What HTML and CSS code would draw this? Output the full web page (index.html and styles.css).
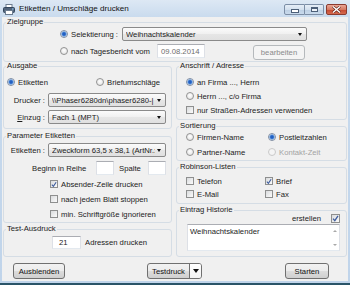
FILE: index.html
```html
<!DOCTYPE html>
<html>
<head>
	<meta charset="utf-8">
	<title>Etiketten / Umschläge drucken</title>
	<link rel="stylesheet" href="styles.css">
</head>
<body>

<div class="fenster">

	<!-- Titelleiste -->
	<div class="titelleiste">
		<svg class="titel-icon" width="12" height="11" viewBox="0 0 12 11">
			<rect x="3" y="0.5" width="6" height="3" fill="#fff" stroke="#6d7d90" stroke-width="1"/>
			<rect x="0.5" y="3.5" width="11" height="5" rx="1" fill="#52657c" stroke="#34465c" stroke-width="1"/>
			<rect x="2.5" y="6.5" width="7" height="4" fill="#fff" stroke="#6d7d90" stroke-width="1"/>
			<rect x="9" y="4.5" width="1.5" height="1" fill="#8fd0ff"/>
		</svg>
		<span class="titel">Etiketten / Umschläge drucken</span>
		<div class="fenster-knoepfe">
			<span class="wk wk-min"><i></i></span>
			<span class="wk wk-max"><i></i></span>
			<span class="wk wk-close">
				<svg width="9" height="7" viewBox="0 0 9 7">
					<path d="M1 0.5 L8 6.5 M8 0.5 L1 6.5" stroke="#5a2018" stroke-width="2.6"/>
					<path d="M1 0.5 L8 6.5 M8 0.5 L1 6.5" stroke="#fff" stroke-width="1.4"/>
				</svg>
			</span>
		</div>
	</div>

	<div class="inhalt">

		<!-- Zielgruppe -->
		<fieldset class="gruppe g-ziel">
			<legend>Zielgruppe</legend>
			<div class="ziel-inhalt">
				<div class="ziel-zeile">
					<label class="option b-selekt"><span class="radio an"></span>Selektierung :</label>
					<div class="combo c-selekt"><span>Weihnachtskalender</span><i class="pfeil"></i></div>
				</div>
				<div class="ziel-zeile z2">
					<label class="option b-tages"><span class="radio"></span>nach Tagesbericht vom</label>
					<div class="feld f-datum grau">09.08.2014</div>
					<button class="knopf aus k-bearbeiten">bearbeiten</button>
				</div>
			</div>
		</fieldset>

		<div class="spalten">

			<!-- linke Spalte -->
			<div class="spalte">
				<fieldset class="gruppe g-ausgabe">
					<legend>Ausgabe</legend>
					<div class="zeile z-ausg">
						<label class="option b-etik"><span class="radio an"></span>Etiketten</label>
						<label class="option"><span class="radio"></span>Briefumschläge</label>
					</div>
					<div class="zeile z-drucker">
						<span class="lbl">Drucker :</span>
						<div class="combo c-breit"><span>\\Phaser6280dn\phaser6280-|</span><i class="pfeil"></i></div>
					</div>
					<div class="zeile z-einzug">
						<span class="lbl"><u>E</u>inzug :</span>
						<div class="combo c-breit"><span>Fach 1 (MPT)</span><i class="pfeil"></i></div>
					</div>
				</fieldset>

				<fieldset class="gruppe g-param">
					<legend>Parameter Etiketten</legend>
					<div class="zeile z-etik">
						<span class="lbl">Etiketten :</span>
						<div class="combo c-breit"><span>Zweckform 63,5 x 38,1 (ArtNr.:</span><i class="pfeil"></i></div>
					</div>
					<div class="zeile z-beginn">
						<span class="l-reihe">Beginn in Reihe</span>
						<div class="feld f-klein"></div>
						<span class="l-spalte">Spalte</span>
						<div class="feld f-klein"></div>
					</div>
					<div class="checks-links">
						<label class="option"><span class="check an"><svg width="7" height="7" viewBox="0 0 7 7"><path d="M1 3.6 L2.8 5.6 L6 0.8" fill="none" stroke="#3f5d9e" stroke-width="1.3"/></svg></span>Absender-Zeile drucken</label>
						<label class="option"><span class="check"></span>nach jedem Blatt stoppen</label>
						<label class="option"><span class="check"></span>min. Schriftgröße ignorieren</label>
					</div>
				</fieldset>

				<fieldset class="gruppe g-test">
					<legend>Test-Ausdruck</legend>
					<div class="zeile z-test">
						<div class="feld f-anzahl">21</div>
						<span>Adressen drucken</span>
					</div>
				</fieldset>
			</div>

			<!-- rechte Spalte -->
			<div class="spalte">
				<fieldset class="gruppe g-anschrift">
					<legend>Anschrift / Adresse</legend>
					<div class="liste l-anschrift">
						<label class="option"><span class="radio an"></span>an Firma ..., Herrn</label>
						<label class="option"><span class="radio"></span>Herrn ..., c/o Firma</label>
						<label class="option"><span class="check"></span>nur Straßen-Adressen verwenden</label>
					</div>
				</fieldset>

				<fieldset class="gruppe g-sort">
					<legend>Sortierung</legend>
					<div class="raster r-sort">
						<label class="option"><span class="radio"></span>Firmen-Name</label>
						<label class="option"><span class="radio an"></span>Postleitzahlen</label>
						<label class="option"><span class="radio"></span>Partner-Name</label>
						<label class="option inaktiv"><span class="radio"></span>Kontakt-Zeit</label>
					</div>
				</fieldset>

				<fieldset class="gruppe g-robinson">
					<legend>Robinson-Listen</legend>
					<div class="raster r-robinson">
						<label class="option"><span class="check"></span>Telefon</label>
						<label class="option"><span class="check an"><svg width="7" height="7" viewBox="0 0 7 7"><path d="M1 3.6 L2.8 5.6 L6 0.8" fill="none" stroke="#3f5d9e" stroke-width="1.3"/></svg></span>Brief</label>
						<label class="option"><span class="check"></span>E-Mail</label>
						<label class="option"><span class="check"></span>Fax</label>
					</div>
				</fieldset>

				<fieldset class="gruppe g-historie">
					<legend>Eintrag Historie</legend>
					<div class="zeile z-erstellen">
						<span>erstellen</span>
						<span class="check an"><svg width="7" height="7" viewBox="0 0 7 7"><path d="M1 3.6 L2.8 5.6 L6 0.8" fill="none" stroke="#3f5d9e" stroke-width="1.3"/></svg></span>
					</div>
					<div class="historie-text">
						<div class="historie-inhalt">Weihnachtskalender</div>
						<div class="rollbalken">
							<i class="rb-auf"></i>
							<i class="rb-ab"></i>
						</div>
					</div>
				</fieldset>
			</div>
		</div>

		<!-- Knöpfe unten -->
		<div class="fussleiste">
			<button class="knopf k-ausblenden">Ausblenden</button>
			<div class="knopf k-test">
				<span class="test-text">Testdruck</span>
				<span class="test-pfeil"><i class="pfeil"></i></span>
			</div>
			<button class="knopf k-starten">Starten</button>
		</div>

	</div>
</div>

</body>
</html>
```

FILE: styles.css
```css
*{
	box-sizing: border-box;
}
body{
	margin: 0;
	font-family: "Liberation Sans", Arial, sans-serif;
	font-size: 7.7px;
	color: #1b1b1b;
}

/*--------Fenster und Titelleiste-----------*/
.fenster{
	width: 350px;
	height: 285px;
	padding: 0 2px;
	background: linear-gradient(#dde8f4, #c9dbee 17px, #c0d4ea);
	border-bottom: 2px solid #2a5468;
	display: flex;
	flex-direction: column;
}
.titelleiste{
	height: 17px;
	display: flex;
	align-items: center;
}
.titel-icon{
	margin-left: 1px;
	margin-top: 1px;
}
.titel{
	margin-left: 4px;
	font-size: 8.1px;
	color: #111;
}
.fenster-knoepfe{
	margin-left: auto;
	margin-right: 1px;
	display: flex;
	align-items: flex-start;
	height: 11px;
	margin-top: 1px;
}
.wk{
	height: 11px;
	border: 1px solid #7c8ea6;
	background: linear-gradient(#e6eef7, #d3e0ee 50%, #bccfe4 50%, #c9daec);
	display: flex;
	align-items: center;
	justify-content: center;
}
.wk-min{
	width: 21px;
	border-radius: 2px 0 0 2px;
}
.wk-min i{
	width: 6px;
	height: 2px;
	margin-top: 3px;
	background: #fff;
	outline: 1px solid #4c5f78;
}
.wk-max{
	width: 19px;
	border-left: none;
	border-radius: 0 2px 2px 0;
}
.wk-max i{
	width: 7px;
	height: 5px;
	border: 1px solid #4c5f78;
	border-top-width: 2px;
	background: #eef3f9;
}
.wk-close{
	width: 21px;
	margin-left: 2px;
	border-color: #8a3b30;
	border-radius: 2px;
	background: linear-gradient(#eaa797, #d67a63 50%, #c5472f 50%, #d46a4f);
}

/*--------Inhalt und Gruppen-----------*/
.inhalt{
	flex: 1;
	margin-bottom: 2px;
	background: #f0f0f0;
	padding: 1px 1px 0;
}
.gruppe{
	margin: 0;
	padding: 0;
	min-width: 0;
	border: 1px solid #d5dde5;
	border-radius: 3px;
}
.gruppe legend{
	padding: 0 1px;
	margin-left: 2px;
	line-height: 8px;
	height: 8px;
}
.spalten{
	display: grid;
	grid-template-columns: 169px 171px;
	gap: 4px;
	margin-top: 0;
}
.spalte{
	display: flex;
	flex-direction: column;
}

.g-ziel{ height: 44px; }
.ziel-inhalt{ padding-left: 56px; }
.g-ausgabe{ height: 67px; }
.g-param{ height: 91px; margin-top: 3px; }
.g-test{ height: 32px; margin-top: 2px; }
.g-anschrift{ height: 58px; }
.g-sort{ height: 39px; margin-top: 2px; }
.g-robinson{ height: 41px; margin-top: 2px; }
.g-historie{ height: 51px; margin-top: 2px; }

/*--------Zeilen-----------*/
.zeile{
	display: flex;
	align-items: center;
}
.ziel-zeile{
	display: flex;
	align-items: center;
	height: 14px;
	margin-top: 1px;
}
.ziel-zeile.z2{
	margin-top: 3px;
}
.option{
	display: flex;
	align-items: center;
	white-space: nowrap;
	height: 10px;
}
.b-selekt{ width: 62px; }
.b-tages{ width: 97px; }
.b-etik{ width: 89px; }

.lbl{
	width: 41px;
	margin-right: 3px;
	text-align: right;
	white-space: nowrap;
}
.z-ausg{ height: 10px; margin-top: 7px; padding-left: 3px; }
.z-drucker{ height: 14px; margin-top: 6px; }
.z-einzug{ height: 14px; margin-top: 3px; }
.z-etik{ height: 14px; margin-top: 3px; }
.z-beginn{ height: 14px; margin-top: 4px; padding-left: 28px; }
.l-reihe{ width: 64px; }
.l-spalte{ width: 29px; margin-left: 5px; }
.checks-links{
	display: flex;
	flex-direction: column;
	gap: 5px;
	margin-top: 4px;
	padding-left: 46px;
}
.z-test{ height: 14px; margin-top: 2px; padding-left: 48px; }
.z-test span{ margin-left: 4px; }

.liste{
	display: flex;
	flex-direction: column;
	gap: 4px;
	padding-left: 9px;
}
.l-anschrift{ margin-top: 7px; }
.raster{
	display: grid;
	padding-left: 9px;
}
.r-sort{
	grid-template-columns: 82px auto;
	row-gap: 5px;
	margin-top: 2px;
}
.r-robinson{
	grid-template-columns: 79px auto;
	row-gap: 3px;
	margin-top: 5px;
}
.z-erstellen{
	height: 9px;
	justify-content: flex-end;
	padding-right: 6px;
}
.z-erstellen .check{
	margin: 0 0 0 10px;
	width: 9px;
	height: 9px;
}

/*--------Steuerelemente-----------*/
.radio{
	width: 8px;
	height: 8px;
	flex-shrink: 0;
	margin-right: 3px;
	border-radius: 50%;
	border: 1px solid #929292;
	background: radial-gradient(circle at 50% 40%, #ffffff, #dedede);
}
.radio.an{
	border-color: #7f8da3;
	background: radial-gradient(circle, #1f57b8 0, #2766c8 1.4px, #7fb0e8 2.4px, #dfe9f5 3px, #fbfbfb 100%);
}
.check{
	width: 8px;
	height: 8px;
	flex-shrink: 0;
	margin-right: 3px;
	border: 1px solid #8e8f8f;
	background: linear-gradient(135deg, #d9dbdd, #fbfbfb);
	display: flex;
	align-items: center;
	justify-content: center;
}
.check svg{
	display: block;
}
.inaktiv{
	color: #a3a3a3;
}
.inaktiv .radio{
	border-color: #c9c9c9;
	background: #f4f4f4;
}

.combo{
	height: 14px;
	display: flex;
	align-items: center;
	padding: 0 4px 0 3px;
	border: 1px solid #8a8a8a;
	border-radius: 2px;
	background: linear-gradient(#fbfbfb, #f0f0f0 50%, #e6e6e6 50%, #e0e0e0);
	white-space: nowrap;
	overflow: hidden;
}
.combo span{
	flex: 1;
	overflow: hidden;
	margin-right: 2px;
}
.pfeil{
	width: 0;
	height: 0;
	border-left: 2.5px solid transparent;
	border-right: 2.5px solid transparent;
	border-top: 3px solid #111;
	flex-shrink: 0;
}
.c-selekt{ width: 185px; }
.c-breit{ width: 118px; }

.feld{
	height: 14px;
	display: flex;
	align-items: center;
	padding-left: 3px;
	background: #fff;
	border: 1px solid #abadb3;
	border-left-color: #dde0e6;
	border-right-color: #dde0e6;
	border-bottom-color: #e3e9ef;
	white-space: nowrap;
}
.grau{ color: #6d6d6d; }
.f-datum{ width: 48px; }
.f-klein{ width: 18px; }
.f-anzahl{ width: 29px; height: 13px; padding-left: 6px; }

.knopf{
	height: 16px;
	padding: 0;
	font: inherit;
	color: #111;
	border: 1px solid #707070;
	border-radius: 3px;
	background: linear-gradient(#f2f2f2, #ebebeb 50%, #dddddd 50%, #cfcfcf);
}
.knopf.aus{
	color: #8a8a8a;
	border-color: #b5b9bc;
	background: #f4f4f4;
}
.k-bearbeiten{
	width: 52px;
	height: 15px;
	margin-left: 48px;
	margin-top: 2px;
}

/*--------Historie Textfeld-----------*/
.historie-text{
	display: flex;
	width: 153px;
	height: 27px;
	margin: 1px 0 0 10px;
	background: #fff;
	border: 1px solid #abadb3;
	border-left-color: #dde0e6;
	border-right-color: #dde0e6;
	border-bottom-color: #e3e9ef;
}
.historie-inhalt{
	flex: 1;
	padding: 2px 2px;
}
.rollbalken{
	width: 9px;
	display: flex;
	flex-direction: column;
	justify-content: space-between;
	align-items: center;
	padding: 5px 0 4px;
}
.rb-auf, .rb-ab{
	width: 0;
	height: 0;
	border-left: 2px solid transparent;
	border-right: 2px solid transparent;
}
.rb-auf{ border-bottom: 2px solid #a8a8a8; }
.rb-ab{ border-top: 2px solid #a8a8a8; }

/*--------Fussleiste-----------*/
.fussleiste{
	display: flex;
	align-items: center;
	margin-top: 6px;
	height: 16px;
}
.k-ausblenden{
	width: 52px;
	margin-left: 10px;
}
.k-test{
	width: 55px;
	margin-left: 82px;
	display: flex;
	overflow: hidden;
}
.test-text{
	width: 41px;
	display: flex;
	align-items: center;
	justify-content: center;
}
.test-pfeil{
	flex: 1;
	display: flex;
	align-items: center;
	justify-content: center;
	border-left: 1px solid #707070;
	background: linear-gradient(#ffffff, #f3f3f3);
}
.test-pfeil .pfeil{
	border-left-width: 3px;
	border-right-width: 3px;
	border-top-width: 4px;
}
.k-starten{
	width: 44px;
	margin-left: auto;
	margin-right: 18px;
}
```
